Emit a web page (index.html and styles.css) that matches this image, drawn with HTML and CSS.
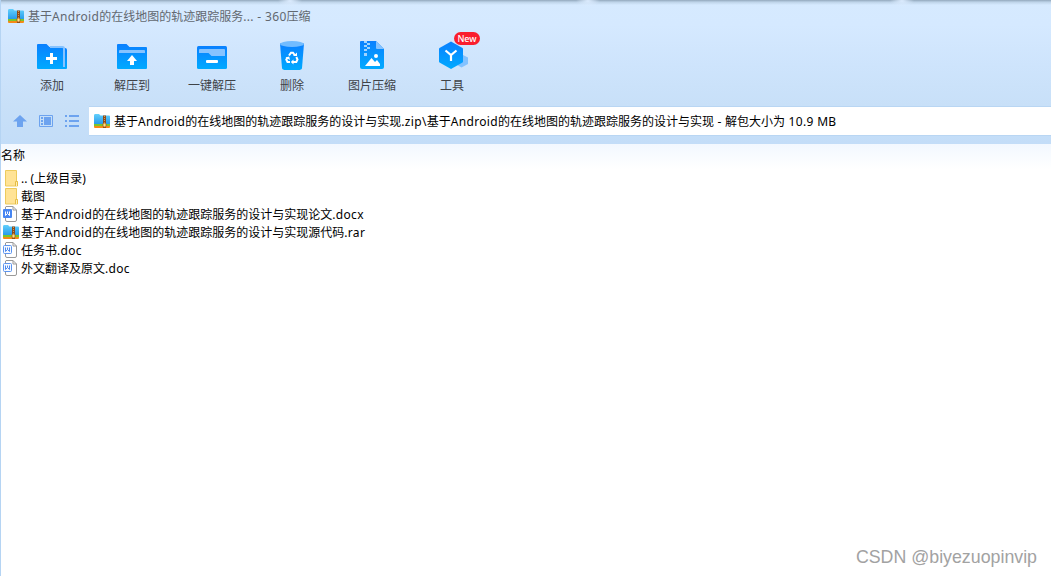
FILE: index.html
```html
<!DOCTYPE html>
<html lang="zh-CN">
<head>
  <meta charset="UTF-8" />
  <title>360压缩</title>
  <link rel="stylesheet" href="styles.css">
</head>
<body>
  <!-- Shared icons -->
  <svg class="defs" width="0" height="0">
    <defs>
      <linearGradient id="blue" x1="0" y1="0" x2="0" y2="1">
        <stop offset="0" stop-color="#0a80ff" />
        <stop offset="1" stop-color="#00aaff" />
      </linearGradient>
      <linearGradient id="zipBlue" x1="0" y1="0" x2="0" y2="1">
        <stop offset="0" stop-color="#63d0fc" />
        <stop offset="1" stop-color="#2196ea" />
      </linearGradient>
      <symbol id="zip" viewBox="0 0 16 14">
        <path d="M0 1.500Q0 0 1 0h4l1.500 1.500H15q1 0 1 1V11H0z" fill="url(#zipBlue)" />
        <path d="M0 10h16v2H0z" fill="#7ac52c" />
        <path d="M0 12h16v1q0 1-1 1H1q-1 0-1-1z" fill="#f58a16" />
        <path d="M9 1.500h3V14H9z" fill="#8c4a1c" />
        <path d="M10.500 2v7" stroke="#d99a4b" stroke-width="1" stroke-dasharray="1 1" />
        <rect x="9" y="9" width="3" height="4" rx="1" fill="#ffe08a" stroke="#a85a12" stroke-width=".8" />
      </symbol>
      <symbol id="folder" viewBox="0 0 14 17">
        <path d="M.5.5h11v10.500l1 1v4H.5z" fill="#ffe395" stroke="#edcb5c" />
        <path d="M10.500 16v-4.500h2v4.500" fill="#fff0b5" stroke="#e5bd48" />
      </symbol>
      <symbol id="doc" viewBox="0 0 15 16">
        <path d="M3 .5h7l3.500 3.500v10q0 1.500-1.500 1.500H4q-1.500 0-1.500-1.500V1z" fill="#fff" stroke="#999" />
        <path d="M10 .5v3.500h3.500" fill="none" stroke="#999" />
        <rect x=".5" y="3.500" width="8" height="8" rx="1" fill="#f5f9ff" stroke="#5b94f0" />
        <path d="M2.500 5.500v4l2-2 2 2v-4M4.500 5.500v2" fill="none" stroke="#4f8bef" />
      </symbol>
      <symbol id="docx" viewBox="0 0 15 16">
        <path d="M3 .5h7l3.500 3.500v10q0 1.500-1.500 1.500H4q-1.500 0-1.500-1.500V1z" fill="#fff" stroke="#999" />
        <path d="M10 .5v3.500h3.500" fill="none" stroke="#999" />
        <rect x="0" y="3" width="9" height="9" rx="1" fill="#4786f2" />
        <path d="M2.500 5.500v4l2-2 2 2v-4M4.500 5.500v2" fill="none" stroke="#fff" />
      </symbol>
    </defs>
  </svg>

  <div class="window">
    <header class="top">
      <div class="titlebar">
        <svg class="zip-icon"><use href="#zip" /></svg>
        <span class="title">基于<span class="latin">Android</span>的在线地图的轨迹跟踪服务<span class="latin">... - 360</span>压缩</span>
      </div>

      <!-- Toolbar -->
      <div class="toolbar">
        <div class="tool">
          <svg width="32" height="32" viewBox="0 0 32 32">
            <path d="M29 5q2 0 2 2v18q0 1-1 1h-3V5z" fill="url(#blue)" />
            <path d="M1 2q0-1 1-1h8.500l3 3H27v22H2q-1 0-1-1z" fill="url(#blue)" />
            <path d="M14 4h12.500q1.500 0 1.500 1.500V24" fill="none" stroke="#86c3ff" stroke-width="2" />
            <path d="M15.500 10v11M10 15.500h11" stroke="#fff" stroke-width="3" />
          </svg>
          <span>添加</span>
        </div>
        <div class="tool">
          <svg width="32" height="32" viewBox="0 0 32 32">
            <path d="M1 2q0-1 1-1h8.500l3 3H30q1 0 1 1v20q0 1-1 1H2q-1 0-1-1z" fill="url(#blue)" />
            <path d="M3 10V8q0-1 1-1h24q1 0 1 1v2z" fill="#86c3ff" />
            <path d="M16 12l5 6h-3v4h-4v-4h-3z" fill="#fff" />
          </svg>
          <span>解压到</span>
        </div>
        <div class="tool">
          <svg width="32" height="32" viewBox="0 0 32 32">
            <rect x="1" y="3" width="30" height="23" rx="1.500" fill="url(#blue)" />
            <path d="M3 10V7q0-1 1-1h24q1 0 1 1v6H15.500l-3-3z" fill="#86c3ff" />
            <rect x="10" y="17" width="12" height="3" rx="1" fill="#fff" />
          </svg>
          <span>一键解压</span>
        </div>
        <div class="tool">
          <svg width="32" height="32" viewBox="0 0 32 32">
            <path d="M4 .5l2 24.500q.2 2 4 2h12q3.800 0 4-2l2-24.500z" fill="url(#blue)" />
            <ellipse cx="16" cy="1" rx="12" ry="3" fill="#72bcff" />
            <g fill="none" stroke="#fff" stroke-width="2">
              <path d="M13 12.500l2-2.800h2l2 2.800" />
              <path d="M20.300 14l1.200 2.500-1.200 2.500h-3.300" />
              <path d="M14 19h-2.500l-1.200-2.500 1.200-2" />
            </g>
            <path d="M17 13h4V9.500zM17.500 16.500v5l-2.700-2.500zM9.500 14.500l3.700-1 .8 3.500z" fill="#fff" />
          </svg>
          <span>删除</span>
        </div>
        <div class="tool">
          <svg width="32" height="32" viewBox="0 2 32 32">
            <path d="M4 1q0-1 1-1h15l8 8v18q0 2-2 2H6q-2 0-2-2z" fill="url(#blue)" />
            <path d="M20 0l8 8h-7q-1 0-1-1z" fill="#86c3ff" />
            <path d="M8 0h3v2H8zM11 2h3v2h-3zM8 4h3v2H8zM11 6h3v2h-3zM8 8h3v2H8zM8 12h3v3H8z" fill="#9fd3ff" />
            <circle cx="20" cy="15" r="2" fill="#fff" />
            <path d="M9 25l6.500-8 3.500 4 2-2 3 4v1.500q0 .5-.5.500z" fill="#fff" />
          </svg>
          <span>图片压缩</span>
        </div>
        <div class="tool">
          <svg width="32" height="32" viewBox="0 2 32 32">
            <path d="M25 13l7 3.500v6.500l-6.500 3.500-6-3.500z" fill="#83c2ff" />
            <path d="M15 .5L26.500 7q.5.300.5 1v12.500q0 .7-.5 1L15 28 3.500 21.500q-.5-.3-.5-1V8q0-.7.5-1z" fill="url(#blue)" />
            <path d="M9.500 9.500l5.500 4.500 5.500-4.500M15 14v6" fill="none" stroke="#fff" stroke-width="2.200" />
          </svg>
          <span>工具</span>
          <b class="badge">New</b>
        </div>
      </div>

      <!-- Address bar -->
      <div class="address-row">
        <div class="nav-icons">
          <svg width="14" height="14" viewBox="0 0 14 14">
            <path d="M7 1l7 6.500h-4V13H4V7.500H0z" fill="#6da3ef" />
          </svg>
          <svg width="14" height="14" viewBox="0 0 14 14">
            <path d="M.5 1.500h13v11H.5z" fill="none" stroke="#6da3ef" />
            <path d="M2 3h2v2H2zM2 6h2v2H2zM2 9h2v2H2zM5 3h7v8H5z" fill="#6da3ef" />
          </svg>
          <svg width="14" height="14" viewBox="0 0 14 14">
            <path d="M0 1h2v2H0zM0 6h2v2H0zM0 11h2v2H0zM4 1h10v2H4zM4 6h10v2H4zM4 11h10v2H4z" fill="#6da3ef" />
          </svg>
        </div>
        <div class="address">
          <svg class="zip-icon"><use href="#zip" /></svg>
          <span>基于<span class="latin">Android</span>的在线地图的轨迹跟踪服务的设计与实现<span class="latin">.zip\</span>基于<span class="latin">Android</span>的在线地图的轨迹跟踪服务的设计与实现<span class="latin"> - </span>解包大小为<span class="latin"> 10.9 MB</span></span>
        </div>
      </div>
    </header>

    <!-- File list -->
    <main class="files">
      <div class="column-head">名称</div>
      <ul>
        <li><svg class="folder-icon"><use href="#folder" /></svg><span class="name">.. (上级目录)</span></li>
        <li><svg class="folder-icon"><use href="#folder" /></svg><span class="name">截图</span></li>
        <li><svg class="doc-icon"><use href="#docx" /></svg><span class="name">基于<span class="latin">Android</span>的在线地图的轨迹跟踪服务的设计与实现论文<span class="latin">.docx</span></span></li>
        <li><svg class="zip-icon"><use href="#zip" /></svg><span class="name">基于<span class="latin">Android</span>的在线地图的轨迹跟踪服务的设计与实现源代码<span class="latin">.rar</span></span></li>
        <li><svg class="doc-icon"><use href="#doc" /></svg><span class="name">任务书<span class="latin">.doc</span></span></li>
        <li><svg class="doc-icon"><use href="#doc" /></svg><span class="name">外文翻译及原文<span class="latin">.doc</span></span></li>
      </ul>
    </main>
  </div>

  <div class="watermark">CSDN @biyezuopinvip</div>
</body>
</html>
```
FILE: styles.css
```css
* { box-sizing: border-box; }

body {
  margin: 0;
  height: 576px;
  overflow: hidden;
  background-color: #fff;
  color: #000;
  font-family: "Noto Sans", "Noto Sans CJK SC", sans-serif;
  font-size: 12px;
  line-height: 18px;
  white-space: nowrap;
}

svg {
  display: block;
  flex-shrink: 0;
}

.defs { position: absolute; }

.latin { letter-spacing: 0.33px; }

.window {
  height: 576px;
  border-left: 1px solid #b5d4f3;
}

.top {
  height: 144px;
  background:
    radial-gradient(ellipse 12px 6px at 289px 1px, #dcecff, transparent),
    radial-gradient(ellipse 12px 6px at 587px 1px, #dcecff, transparent),
    radial-gradient(ellipse 12px 6px at 901px 1px, #dcecff, transparent),
    linear-gradient(#94a9bd 0, #a5bbd0 1px, #bdd3e8 2px, rgba(213, 233, 255, 0) 5px),
    linear-gradient(#d6eaff 0, #d5e9ff 25px, #cee4fc 65px, #c8e0f8 105px, #c3ddf8 144px);
}

.titlebar {
  display: flex;
  align-items: center;
  gap: 4px;
  height: 34px;
  padding-left: 7px;
  color: #626870;
}

.zip-icon {
  width: 16px;
  height: 14px;
}

.titlebar .zip-icon { margin-bottom: 2px; }

.toolbar {
  display: flex;
  height: 73px;
  padding: 9px 0 0 11px;
}

.tool {
  position: relative;
  display: flex;
  flex-direction: column;
  align-items: center;
  width: 80px;
  gap: 2px;
  color: #3f4348;
}

.tool svg { overflow: visible; }

.badge {
  position: absolute;
  left: 42px;
  top: -11px;
  width: 26px;
  height: 13px;
  border-radius: 7px;
  background-color: #fa1e2d;
  color: #fff;
  font-size: 9px;
  font-weight: 500;
  line-height: 13px;
  text-align: center;
}

.address-row {
  display: flex;
  height: 28px;
}

.nav-icons {
  display: flex;
  align-items: center;
  gap: 12px;
  width: 88px;
  padding-left: 12px;
}

.address {
  display: flex;
  flex: 1;
  align-items: center;
  gap: 4px;
  height: 30px;
  margin-top: -1px;
  padding-left: 5px;
  border: solid #b9d6f3;
  border-width: 1px 0;
  background-color: #fff;
}

.address > span { padding-top: 1px; }

.column-head {
  height: 25px;
  padding-top: 3px;
  background: linear-gradient(#f2f8ff, #fff);
}

.files ul {
  list-style: none;
  margin: 0;
  padding: 0;
}

.files li {
  display: flex;
  align-items: center;
  height: 18px;
  padding-left: 2px;
}

.name {
  margin-left: 2px;
  padding-top: 2px;
}

.folder-icon {
  width: 14px;
  height: 17px;
  margin-left: 2px;
}

.doc-icon {
  width: 15px;
  height: 16px;
  margin-right: 1px;
}

.watermark {
  position: absolute;
  right: 14px;
  bottom: 8px;
  color: #a2a2a2;
  font-family: "Liberation Sans", sans-serif;
  font-size: 17.8px;
  line-height: 22px;
}
```
